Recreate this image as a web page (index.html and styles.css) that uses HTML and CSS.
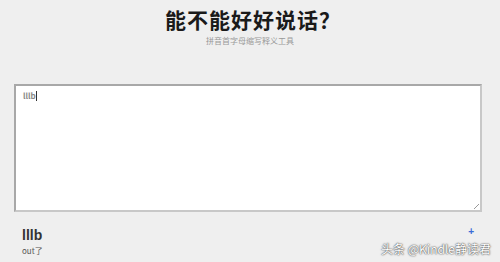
FILE: index.html
```html
<!DOCTYPE html>
<html lang="zh-CN">
<head>
    <meta charset="UTF-8">
    <title>能不能好好说话？</title>
    <link rel="stylesheet" href="styles.css">
</head>
<body>
    <header class="head">
        <h1>能不能好好说话？</h1>
        <p class="sub">拼音首字母缩写释义工具</p>
    </header>

    <div class="box">
        <div class="input">lllb<span class="caret"></span></div>
        <span class="grip"></span>
    </div>

    <div class="result">
        <div class="word">
            <h2>lllb</h2>
            <p>out了</p>
        </div>
        <span class="plus">+</span>
    </div>

    <span class="mark">头条 @Kindle静读君</span>
</body>
</html>
```

FILE: styles.css
```css
body {
    margin: 0;
    background: #efefef;
    font-family: "Noto Sans CJK SC", "Liberation Sans", sans-serif;
    width: 500px;
    height: 262px;
    overflow: hidden;
    position: relative;
}

.head {
    text-align: center;
    padding-top: 5px;
}

.head h1 {
    margin: 0 0 0 6px;
    font-size: 21px;
    line-height: 28px;
    font-weight: 700;
    letter-spacing: 1px;
    color: #1a1a1a;
}

.sub {
    margin: 2px 0 0;
    font-size: 8px;
    line-height: 12px;
    color: #999;
}

.box {
    position: relative;
    margin: 37px 0 0 14px;
    width: 464px;
    height: 124px;
    background: #fff;
    border: 2px solid #a8a8a8;
    border-right-color: #c8c8c8;
    border-bottom-color: #c8c8c8;
}

.input {
    padding: 5px 0 0 7px;
    font-size: 8px;
    line-height: 10px;
    font-weight: 700;
    color: #888;
}

.caret {
    display: inline-block;
    width: 1px;
    height: 10px;
    background: #333;
    vertical-align: -2px;
}

.grip {
    position: absolute;
    right: 1px;
    bottom: 1px;
    width: 5px;
    height: 5px;
    background: linear-gradient(135deg, transparent 50%, #999 50%, #999 60%, transparent 60%);
}

.result {
    display: flex;
    align-items: flex-start;
    justify-content: space-between;
    padding: 15px 26px 0 22px;
}

.word h2 {
    margin: 0;
    font-family: "Liberation Sans", sans-serif;
    font-size: 14px;
    line-height: 16px;
    font-weight: 700;
    color: #333;
}

.word p {
    margin: 3px 0 0;
    font-size: 8px;
    line-height: 10px;
    color: #555;
}

.plus {
    font-family: "Liberation Sans", sans-serif;
    color: #3a6bd6;
    font-size: 10px;
    line-height: 9px;
    font-weight: 700;
    margin-top: 0;
}

.mark {
    position: absolute;
    right: 9px;
    bottom: 7px;
    font-size: 12px;
    line-height: 12px;
    color: #fff;
    text-shadow: 0 0 2px #555, 0 0 1px #333;
}
```
